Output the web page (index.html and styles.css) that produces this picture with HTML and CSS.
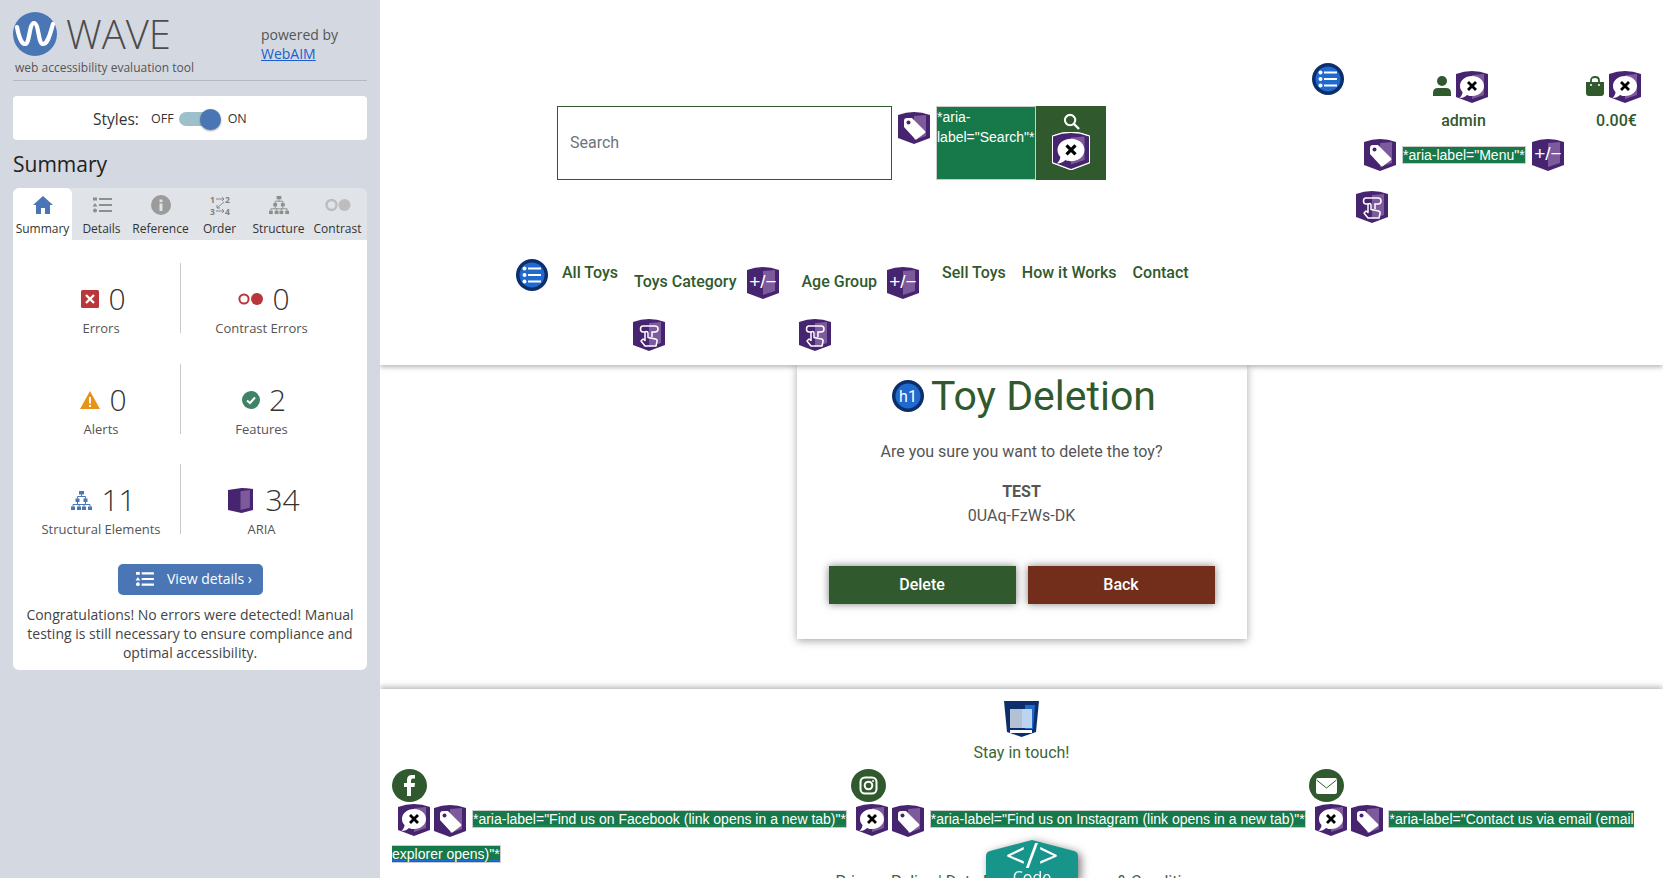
FILE: index.html
```html
<!DOCTYPE html>
<html>
  <head>
    <meta charset="utf-8">
    <title>Toy Deletion</title>
    <link rel="stylesheet" href="styles.css">
  </head>
  <body>
    <svg class="defs" width="0" height="0">
      <defs>
        <g id="shield">
          <path d="M0 3 Q8 0 16 0 Q24 0 32 3 V26 L16 32 L0 26 Z" fill="#46246f"/>
          <path d="M16 4 L28 3 V24 L16 28 Z" fill="#7d5a9c"/>
        </g>
        <symbol id="i-error" viewBox="0 0 32 32">
          <use href="#shield"/>
          <path d="M16 5 C23 5 28 9.500 28 15 C28 20.500 23 25 16 25 C14 25 13 25 11 24 C9 26 7 27 3.500 27 C5.500 25 6.500 23 6.500 21 C5 19.500 4 17.500 4 15 C4 9.500 9 5 16 5 Z" fill="#fff"/>
          <path d="M12 11 L20 19 M20 11 L12 19" stroke="#000" stroke-width="2.800"/>
        </symbol>
        <symbol id="i-tag" viewBox="0 0 32 32">
          <use href="#shield"/>
          <path d="M6 9 Q6 6 9 6 L14 6 L27 19 Q28 20 27 21 L19 27 Q18 28 17 27 L6 15 Z" fill="#fff"/>
          <circle cx="10.500" cy="10.500" r="2" fill="#46246f"/>
        </symbol>
        <symbol id="i-expand" viewBox="0 0 32 32">
          <use href="#shield"/>
          <text x="16" y="21" text-anchor="middle" class="shield-text">+/−</text>
        </symbol>
        <symbol id="i-hand" viewBox="0 0 32 32">
          <use href="#shield"/>
          <path d="M12 13 H10 Q7.500 13 7.500 10 Q7.500 7 10 7 H22 Q25 7 25 10 Q25 13 22 13 H19 V18" fill="none" stroke="#fff" stroke-width="1.500"/>
          <path d="M12 27 L8 22 L10 20 L12 21.500 V14 Q12 12.500 13.500 12.500 Q15 12.500 15 14 V18.500 L22.500 20 Q24.500 20.500 24 22.500 L23 27 Z" fill="none" stroke="#fff" stroke-width="1.500" stroke-linejoin="round"/>
        </symbol>
        <symbol id="i-list" viewBox="0 0 32 32">
          <circle cx="16" cy="16" r="16" fill="#0c2f6b"/>
          <circle cx="16" cy="16" r="12.500" fill="#1f69cf"/>
          <circle cx="8.500" cy="9.500" r="2" fill="#fff"/>
          <circle cx="8.500" cy="16" r="2" fill="#fff"/>
          <circle cx="8.500" cy="22.500" r="2" fill="#fff"/>
          <path d="M12 9.500 H25 M12 16 H25 M12 22.500 H25" stroke="#fff" stroke-width="2"/>
        </symbol>
        <symbol id="i-details" viewBox="0 0 20 17">
          <rect x="1" y="1" width="4" height="3"/>
          <path d="M3 6.500 L5.500 10 H0.500 Z"/>
          <circle cx="3" cy="14" r="2"/>
          <path d="M7 2.500 H20 M7 8.500 H20 M7 14.500 H20" stroke="currentColor" stroke-width="2.200"/>
        </symbol>
      </defs>
    </svg>

    <aside class="wave">
      <div class="wave-brand">
        <div class="brand-left">
          <div class="brand-logo">
            <svg class="logo-mark" viewBox="0 0 44 44">
              <circle cx="22" cy="22" r="22" fill="#4a76b5"/>
              <path d="M4 15 C6 26 9 32 12 32 C17 32 16 11 21 11 C26 11 25 32 30 32 C35 32 37 22 40 12" fill="none" stroke="#fff" stroke-width="4.200" stroke-linecap="round"/>
            </svg>
            <span class="logo-word">WAVE</span>
          </div>
          <div class="brand-tag">web accessibility evaluation tool</div>
        </div>
        <div class="brand-right">powered by<br><a href="#">WebAIM</a></div>
      </div>

      <div class="styles-box">
        <span class="styles-name">Styles:</span>
        <span class="styles-off">OFF</span>
        <span class="toggle"><span class="toggle-knob"></span></span>
        <span class="styles-on">ON</span>
      </div>

      <h2 class="wave-title">Summary</h2>

      <div class="tabs">
        <div class="tab tab-on">
          <svg class="tab-icon" viewBox="0 0 20 18"><path d="M10 0 L20 9 H17 V18 H12 V12 H8 V18 H3 V9 H0 Z" fill="#4a76b5"/></svg>
          <span>Summary</span>
        </div>
        <div class="tab">
          <svg class="tab-icon tab-grey" viewBox="0 0 20 17"><use href="#i-details"/></svg>
          <span>Details</span>
        </div>
        <div class="tab">
          <svg class="tab-icon" viewBox="0 0 20 20"><circle cx="10" cy="10" r="10" fill="#9b9b9b"/><rect x="8.500" y="8.500" width="3" height="7.500" fill="#e0e3e8"/><rect x="8.500" y="4.500" width="3" height="2.600" fill="#e0e3e8"/></svg>
          <span>Reference</span>
        </div>
        <div class="tab">
          <svg class="tab-icon tab-order" viewBox="0 0 20 20">
            <text x="0" y="7.500" class="order-text">1</text><text x="15" y="7.500" class="order-text">2</text>
            <text x="0" y="19.500" class="order-text">3</text><text x="15" y="19.500" class="order-text">4</text>
            <path d="M6 4 H14 M12 2 L14 4 L12 6 M14 7 L7 13 M7 10 V13 H10 M6 16 H14 M12 14 L14 16 L12 18" fill="none" stroke="#808080" stroke-width="0.900"/>
          </svg>
          <span>Order</span>
        </div>
        <div class="tab">
          <svg class="tab-icon" viewBox="0 0 21 19" fill="#8e8e8e">
            <rect x="8" y="0" width="5" height="3.500"/><rect x="4.500" y="7.500" width="4" height="3.500"/><rect x="12.500" y="7.500" width="4" height="3.500"/>
            <rect x="0" y="15.500" width="4" height="3.500"/><rect x="6" y="15.500" width="4" height="3.500"/><rect x="11" y="15.500" width="4" height="3.500"/><rect x="17" y="15.500" width="4" height="3.500"/>
            <path d="M10.500 3.500 V5.500 M6.500 7.500 V5.500 H14.500 V7.500 M2 15.500 V13.500 H19 V15.500 M6.500 11 V13.500 M14.500 11 V13.500 M8 13.500 V15.500 M13 13.500 V15.500" fill="none" stroke="#8e8e8e" stroke-width="1"/>
          </svg>
          <span>Structure</span>
        </div>
        <div class="tab">
          <svg class="tab-icon tab-wide" viewBox="0 0 26 13"><circle cx="6.500" cy="6.500" r="5" fill="none" stroke="#bdbdbd" stroke-width="2.400"/><circle cx="19.500" cy="6.500" r="6" fill="#bdbdbd"/></svg>
          <span>Contrast</span>
        </div>
      </div>

      <div class="summary">
        <div class="stats">
          <div class="stat">
            <div class="stat-top"><svg class="stat-icon" viewBox="0 0 18 18"><rect width="18" height="18" rx="1.500" fill="#b9363a"/><path d="M5 5 L13 13 M13 5 L5 13" stroke="#fff" stroke-width="2.400"/></svg><span class="stat-num">0</span></div>
            <div class="stat-label">Errors</div>
          </div>
          <div class="stat stat-right">
            <div class="stat-top"><svg class="stat-icon icon-contrast" viewBox="0 0 25 12"><circle cx="6" cy="6" r="4.600" fill="none" stroke="#b9363a" stroke-width="2"/><circle cx="19" cy="6" r="6" fill="#b9363a"/></svg><span class="stat-num">0</span></div>
            <div class="stat-label">Contrast Errors</div>
          </div>
          <div class="stat">
            <div class="stat-top"><svg class="stat-icon icon-alert" viewBox="0 0 20 18"><path d="M10 0 L20 18 H0 Z" fill="#e8921a"/><rect x="9" y="6" width="2" height="6.500" fill="#fff"/><rect x="9" y="14" width="2" height="2" fill="#fff"/></svg><span class="stat-num">0</span></div>
            <div class="stat-label">Alerts</div>
          </div>
          <div class="stat stat-right">
            <div class="stat-top"><svg class="stat-icon" viewBox="0 0 18 18"><circle cx="9" cy="9" r="9" fill="#3f8266"/><path d="M5 9.500 L8 12 L13 6.500" fill="none" stroke="#fff" stroke-width="2"/></svg><span class="stat-num">2</span></div>
            <div class="stat-label">Features</div>
          </div>
          <div class="stat">
            <div class="stat-top"><svg class="stat-icon icon-struct" viewBox="0 0 21 19" fill="#4a76b5">
              <rect x="8" y="0" width="5" height="3.500"/><rect x="4.500" y="7.500" width="4" height="3.500"/><rect x="12.500" y="7.500" width="4" height="3.500"/>
              <rect x="0" y="15.500" width="4" height="3.500"/><rect x="6" y="15.500" width="4" height="3.500"/><rect x="11" y="15.500" width="4" height="3.500"/><rect x="17" y="15.500" width="4" height="3.500"/>
              <path d="M10.500 3.500 V5.500 M6.500 7.500 V5.500 H14.500 V7.500 M2 15.500 V13.500 H19 V15.500 M6.500 11 V13.500 M14.500 11 V13.500 M8 13.500 V15.500 M13 13.500 V15.500" fill="none" stroke="#4a76b5" stroke-width="1"/>
            </svg><span class="stat-num">11</span></div>
            <div class="stat-label">Structural Elements</div>
          </div>
          <div class="stat stat-right">
            <div class="stat-top"><svg class="stat-icon icon-aria" viewBox="0 0 24 24"><path d="M0 2 L13 0 Q18 0 24 1 V21 L13 24 L0 21 Z" fill="#46246f"/><path d="M12 3 L21 2 V19 L12 21 Z" fill="#7d5a9c"/></svg><span class="stat-num">34</span></div>
            <div class="stat-label">ARIA</div>
          </div>
        </div>

        <a class="view-btn" href="#">
          <svg class="view-icon" viewBox="0 0 20 17" fill="#fff"><use href="#i-details"/></svg>
          <span>View details ›</span>
        </a>

        <p class="congrats">Congratulations! No errors were detected! Manual testing is still necessary to ensure compliance and optimal accessibility.</p>
      </div>
    </aside>

    <div class="page">
      <header class="site-head">
        <div class="head-top">
          <div class="search">
            <input class="search-input" type="text" placeholder="Search">
            <svg class="wi wi-tag"><use href="#i-tag"/></svg>
            <span class="aria-note aria-search">*aria-label="Search"*</span>
            <button class="search-btn">
              <svg class="search-glass" viewBox="0 0 18 18"><circle cx="7.500" cy="7.500" r="5.500" fill="none" stroke="#fff" stroke-width="2.200"/><path d="M11.500 11.500 L17 17" stroke="#fff" stroke-width="2.400"/></svg>
              <svg class="wi wi-ringed"><use href="#i-error"/></svg>
            </button>
          </div>

          <div class="account">
            <div class="account-row">
              <svg class="wi"><use href="#i-list"/></svg>
              <div class="acct acct-user">
                <div class="acct-icons">
                  <svg class="acct-glyph" viewBox="0 0 18 20"><circle cx="9" cy="5" r="5" fill="#305a2d"/><path d="M0 20 V17 Q0 12 5 12 H13 Q18 12 18 17 V20 Z" fill="#305a2d"/></svg>
                  <svg class="wi"><use href="#i-error"/></svg>
                </div>
                <div class="acct-text">admin</div>
              </div>
              <div class="acct acct-cart">
                <div class="acct-icons">
                  <svg class="acct-glyph" viewBox="0 0 18 20"><path d="M5 7 V4.500 Q5 1 9 1 Q13 1 13 4.500 V7" fill="none" stroke="#305a2d" stroke-width="1.800"/><path d="M0 6 H18 V17 Q18 20 15 20 H3 Q0 20 0 17 Z" fill="#305a2d"/><circle cx="5" cy="9" r="1" fill="#fff"/><circle cx="13" cy="9" r="1" fill="#fff"/></svg>
                  <svg class="wi"><use href="#i-error"/></svg>
                </div>
                <div class="acct-text">0.00€</div>
              </div>
            </div>
            <div class="menu-row">
              <svg class="wi"><use href="#i-tag"/></svg>
              <span class="aria-note aria-menu">*aria-label="Menu"*</span>
              <svg class="wi"><use href="#i-expand"/></svg>
            </div>
            <svg class="wi menu-hand"><use href="#i-hand"/></svg>
          </div>
        </div>

        <nav class="nav">
          <svg class="wi"><use href="#i-list"/></svg>
          <a class="nav-link nav-first" href="#">All Toys</a>
          <div class="nav-drop">
            <div class="drop-row"><a class="nav-link" href="#">Toys Category</a><svg class="wi"><use href="#i-expand"/></svg></div>
            <svg class="wi drop-hand"><use href="#i-hand"/></svg>
          </div>
          <div class="nav-drop">
            <div class="drop-row"><a class="nav-link" href="#">Age Group</a><svg class="wi"><use href="#i-expand"/></svg></div>
            <svg class="wi drop-hand"><use href="#i-hand"/></svg>
          </div>
          <a class="nav-link nav-sell" href="#">Sell Toys</a>
          <a class="nav-link nav-next" href="#">How it Works</a>
          <a class="nav-link nav-next" href="#">Contact</a>
        </nav>
      </header>

      <main class="content">
        <section class="card">
          <h1 class="card-title">
            <svg class="wi" viewBox="0 0 32 32"><circle cx="16" cy="16" r="16" fill="#0c2f6b"/><circle cx="16" cy="16" r="12.500" fill="#1f69cf"/><text x="16" y="22" text-anchor="middle" class="h1-text">h1</text></svg>
            <span>Toy Deletion</span>
          </h1>
          <p class="card-ask">Are you sure you want to delete the toy?</p>
          <div class="card-name">TEST</div>
          <div class="card-code">0UAq-FzWs-DK</div>
          <div class="card-btns">
            <button class="btn btn-del">Delete</button>
            <button class="btn btn-back">Back</button>
          </div>
        </section>
      </main>

      <footer class="site-foot">
        <svg class="foot-landmark" viewBox="0 0 35 36">
          <path d="M0 0 H35 L32 31 L17.500 36 L3 31 Z" fill="#0c2f6b"/>
          <path d="M21 4 H31 L29 28 L21 28 Z" fill="#1f69cf"/>
          <rect x="6" y="8" width="12" height="19" fill="#b4c0d4"/>
          <rect x="18" y="8" width="10" height="19" fill="#bcd4f0"/>
          <rect x="6" y="29" width="22" height="3" fill="#fff"/>
        </svg>
        <div class="foot-touch">Stay in touch!</div>
        <div class="foot-circles">
          <a class="circle" href="#"><svg viewBox="0 0 35 33"><path d="M19 27 V18 H22.500 L23 14 H19 V11.500 Q19 9.500 21 9.500 H23 V6 H20 Q15 6 15 11 V14 H12 V18 H15 V27 Z" fill="#fff"/></svg></a>
          <a class="circle" href="#"><svg viewBox="0 0 35 33"><rect x="9.500" y="8.500" width="16" height="16" rx="4.500" fill="none" stroke="#fff" stroke-width="2"/><circle cx="17.500" cy="16.500" r="3.800" fill="none" stroke="#fff" stroke-width="2"/><circle cx="22" cy="12" r="1" fill="#fff"/></svg></a>
          <a class="circle" href="#"><svg viewBox="0 0 35 33"><rect x="7" y="9" width="21" height="16" rx="2" fill="#fff"/><path d="M7.500 11 L17.500 19 L27.500 11" fill="none" stroke="#305a2d" stroke-width="1"/></svg></a>
        </div>
        <p class="foot-notes">
          <svg class="wi wi-first"><use href="#i-error"/></svg>
          <svg class="wi wi-low"><use href="#i-tag"/></svg>
          <a class="aria-note aria-link" href="#">*aria-label="Find us on Facebook (link opens in a new tab)"*</a>
          <svg class="wi wi-next"><use href="#i-error"/></svg>
          <svg class="wi wi-low"><use href="#i-tag"/></svg>
          <a class="aria-note aria-link" href="#">*aria-label="Find us on Instagram (link opens in a new tab)"*</a>
          <svg class="wi wi-next"><use href="#i-error"/></svg>
          <svg class="wi wi-low"><use href="#i-tag"/></svg>
          <a class="aria-note aria-link" href="#">*aria-label="Contact us via email (email explorer opens)"*</a>
        </p>
        <div class="foot-legal">Privacy Policy | Data Protection | Terms &amp; Conditions</div>
      </footer>

      <div class="code-tab">
        <svg viewBox="0 0 92 40" width="92" height="40"><path d="M0 16 Q0 12 4 11 L46 0 L88 11 Q92 12 92 16 V40 H0 Z" fill="#17958b"/></svg>
        <span class="code-sign">&lt;/&gt;</span>
        <span class="code-word">Code</span>
      </div>
    </div>
  </body>
</html>
```

FILE: styles.css
```css
*{
  box-sizing: border-box;
}
html,body{
  margin: 0;
  height: 878px;
  overflow: hidden;
}
body{
  display: flex;
  background: #fff;
  font-family: Roboto, sans-serif;
  color: #305a2d;
}
.defs{
  position: absolute;
}
.wi{
  display: inline-block;
  width: 32px;
  height: 32px;
  flex: none;
  vertical-align: middle;
}
.shield-text{
  font: 400 19px "Liberation Sans", sans-serif;
  fill: #fff;
}
.h1-text{
  font: 400 16px Roboto, sans-serif;
  fill: #fff;
}
.order-text{
  font: 700 8.500px "Open Sans", sans-serif;
  fill: #808080;
}

/* wave panel */
.wave{
  width: 380px;
  flex: none;
  background: #d4d8e0;
  padding: 12px 13px 0;
  font-family: "Open Sans", sans-serif;
  color: #333;
}
.wave-brand{
  display: flex;
  height: 69px;
  border-bottom: 1px solid #b5b8be;
}
.brand-left{
  width: 248px;
}
.brand-logo{
  display: flex;
  height: 44px;
  gap: 9px;
}
.logo-mark{
  width: 44px;
  height: 44px;
}
.logo-word{
  font-size: 40px;
  font-weight: 300;
  line-height: 44px;
  color: #4c4c4c;
}
.brand-tag{
  font-size: 12px;
  line-height: 17px;
  margin: 3px 0 0 2px;
  color: #555;
}
.brand-right{
  font-size: 14px;
  line-height: 19px;
  padding-top: 13px;
  color: #555;
}
.brand-right a{
  color: #1a5fd0;
}
.styles-box{
  display: flex;
  align-items: center;
  height: 44px;
  margin-top: 15px;
  padding: 1px 0 0 80px;
  background: #fff;
  border-radius: 4px;
}
.styles-name{
  font-size: 15.500px;
  width: 58px;
}
.styles-off,.styles-on{
  font-size: 12.500px;
}
.toggle{
  position: relative;
  width: 41px;
  height: 14px;
  margin: 0 8px 0 5px;
  background: #9dc1cc;
  border-radius: 7px;
}
.toggle-knob{
  position: absolute;
  top: -3px;
  right: -1px;
  width: 21px;
  height: 21px;
  border-radius: 50%;
  background: #4a76b5;
  box-shadow: 0 1px 2px rgba(0,0,0,.4);
}
.wave-title{
  font-size: 21px;
  font-weight: 400;
  line-height: 30px;
  margin: 9px 0 9px;
  color: #222;
}
.tabs{
  display: flex;
  height: 52px;
  background: #e0e3e8;
  border-radius: 6px 6px 0 0;
}
.tab{
  flex: 1;
  display: flex;
  flex-direction: column;
  align-items: center;
  padding-top: 7px;
  font-size: 12px;
  line-height: 16px;
  white-space: nowrap;
}
.tab-on{
  background: #fff;
  border-radius: 6px 6px 0 0;
}
.tab-icon{
  width: 20px;
  height: 20px;
  margin-bottom: 6px;
}
.tab-grey{
  fill: #8e8e8e;
  color: #8e8e8e;
}
.tab-order{
  overflow: visible;
}
.tab-wide{
  width: 26px;
}
.summary{
  background: #fff;
  height: 430px;
  border-radius: 0 0 6px 6px;
}
.stats{
  display: grid;
  grid-template-columns: 158px 162px;
  grid-auto-rows: 70px;
  row-gap: 30.500px;
  padding: 23px 0 0 9px;
}
.stat{
  display: flex;
  flex-direction: column;
  align-items: center;
  text-align: center;
}
.stat-right{
  border-left: 1px solid #c9c9c9;
}
.stat-top{
  display: flex;
  align-items: center;
  gap: 9px;
  height: 44px;
  margin-top: 14px;
  padding-left: 5px;
  flex: none;
}
.stat-icon{
  width: 18px;
  height: 18px;
}
.icon-contrast{
  width: 25px;
  height: 12px;
}
.icon-alert{
  width: 20px;
}
.icon-struct{
  width: 21px;
  height: 19px;
}
.icon-aria{
  width: 25px;
  height: 25px;
  margin-right: 3px;
}
.stat-num{
  font-size: 30px;
  font-weight: 300;
  line-height: 44px;
  color: #333;
}
.stat-label{
  font-size: 13px;
  line-height: 18px;
  margin-top: -2px;
  color: #555;
  flex: none;
}
.view-btn{
  display: flex;
  align-items: center;
  width: 145px;
  height: 31px;
  margin: 30px 0 0 105px;
  padding: 0 0 2px 17px;
  background: #4a76b5;
  border-radius: 5px;
  color: #fff;
  font-size: 14px;
  text-decoration: none;
}
.view-icon{
  width: 19px;
  height: 16px;
  margin-right: 13px;
  color: #fff;
}
.congrats{
  margin: 10px 8px 0;
  font-size: 14px;
  line-height: 19px;
  text-align: center;
  color: #444;
}

/* page */
.page{
  flex: 1;
  position: relative;
  display: flex;
  flex-direction: column;
  overflow: hidden;
  min-width: 0;
}
.site-head{
  position: relative;
  z-index: 2;
  flex: none;
  height: 365px;
  background: #fff;
  box-shadow: 0 2px 5px rgba(0,0,0,.3);
}
.head-top{
  display: flex;
  height: 259px;
  padding-left: 177px;
}
.search{
  display: flex;
  align-items: flex-start;
  margin-top: 106px;
}
.search-input{
  width: 335px;
  height: 74px;
  padding: 0 12px 2px;
  border: 1px solid #305a2d;
  font: 16px Roboto, sans-serif;
  outline: none;
}
.search-input::placeholder{
  color: #6c757d;
}
.wi-tag{
  margin: 6px 6px 0;
}
.aria-note{
  background: #17784a;
  border: 1px solid #ccc;
  color: #fff;
  font: 14px/1 "Liberation Sans", sans-serif;
}
.aria-search{
  display: block;
  width: 100px;
  height: 74px;
  line-height: 20px;
  white-space: pre-line;
}
.search-btn{
  display: flex;
  flex-direction: column;
  align-items: center;
  width: 70px;
  height: 74px;
  padding: 7px 0 0;
  background: #305a2d;
  border: 0;
}
.search-glass{
  width: 17px;
  height: 17px;
  margin-bottom: 3px;
}
.wi-ringed{
  width: 36px;
  height: 36px;
  filter: drop-shadow(1px 0 0 #fff) drop-shadow(-1px 0 0 #fff) drop-shadow(0 1px 0 #fff) drop-shadow(0 -1px 0 #fff);
}
.account{
  margin-left: 206px;
  padding-top: 63px;
}
.account-row{
  display: flex;
  height: 76px;
}
.acct{
  margin-top: 8px;
  text-align: center;
}
.acct-user{
  margin-left: 89px;
}
.acct-cart{
  margin-left: 98px;
}
.acct-icons{
  display: flex;
  align-items: center;
  gap: 5px;
}
.acct-glyph{
  width: 18px;
  height: 20px;
  margin-bottom: 2px;
}
.acct-text{
  font-size: 16px;
  font-weight: 500;
  line-height: 24px;
  margin-top: 6px;
  padding-left: 6px;
}
.menu-row{
  display: flex;
  align-items: center;
  gap: 6px;
  margin-left: 52px;
}
.aria-menu{
  padding: 1px 0;
  white-space: nowrap;
}
.menu-hand{
  display: block;
  margin: 20px 0 0 44px;
}
.nav{
  display: flex;
  align-items: flex-start;
  padding-left: 136px;
}
.nav-link{
  font-size: 16px;
  font-weight: 500;
  line-height: 28px;
  color: #305a2d;
  text-decoration: none;
  white-space: nowrap;
}
.nav-first{
  margin-left: 14px;
}
.nav-drop{
  margin: 8px 0 0 16px;
}
.nav-drop + .nav-drop{
  margin-left: 23px;
}
.drop-row{
  display: flex;
  align-items: center;
  gap: 10px;
}
.drop-row .nav-link{
  margin-top: -3px;
}
.drop-hand{
  display: block;
  margin: 20px 0 0 -1px;
}
.nav-drop + .nav-drop .drop-hand{
  margin-left: -3px;
}
.nav-sell{
  margin-left: 23px;
}
.nav-next{
  margin-left: 16px;
}

.content{
  flex: none;
  height: 324px;
  display: flex;
  justify-content: center;
  align-items: flex-start;
}
.card{
  width: 450px;
  height: 274px;
  padding: 8px 32px 0;
  text-align: center;
  background: #fff;
  box-shadow: 0 2px 8px rgba(0,0,0,.35);
}
.card-title{
  display: flex;
  justify-content: center;
  align-items: center;
  gap: 7px;
  margin: 0;
  padding-left: 5px;
  font-size: 41px;
  font-weight: 400;
  line-height: 46px;
}
.card-ask{
  margin: 21px 0 0;
  font-size: 16px;
  line-height: 24px;
  color: #555;
}
.card-name{
  margin-top: 16px;
  font-size: 16px;
  font-weight: 700;
  line-height: 24px;
  color: #555;
}
.card-code{
  font-size: 16px;
  line-height: 24px;
  color: #555;
}
.card-btns{
  display: flex;
  gap: 12px;
  margin-top: 38px;
}
.btn{
  flex: 1;
  height: 38px;
  padding: 0 0 2px;
  border: 0;
  color: #fff;
  font: 500 16px Roboto, sans-serif;
  box-shadow: 0 0 8px rgba(0,0,0,.5);
}
.btn-del{
  background: #305a2d;
}
.btn-back{
  background: #722e1a;
}

.site-foot{
  position: relative;
  flex: none;
  height: 220px;
  padding-top: 12px;
  background: #fff;
  text-align: center;
  box-shadow: 0 -2px 6px rgba(0,0,0,.3);
}
.foot-landmark{
  display: block;
  width: 35px;
  height: 36px;
  margin: 0 auto;
}
.foot-touch{
  font-size: 16px;
  line-height: 24px;
  margin-top: 4px;
  color: #3d6539;
}
.foot-circles{
  display: grid;
  grid-template-columns: repeat(3, 458.500px);
  margin: 4px 0 0 12px;
  text-align: left;
}
.circle{
  display: block;
  width: 35px;
  height: 33px;
  background: #305a2d;
  border-radius: 50%;
}
.circle svg{
  display: block;
}
.foot-notes{
  margin: 0 12px;
  line-height: 34px;
  text-align: left;
}
.wi-first{
  margin-left: 6px;
}
.wi-next{
  margin-left: 5px;
}
.wi-low{
  margin-top: 2px;
}
.aria-link{
  margin-left: 2px;
  color: #fff;
  text-decoration: underline #1a6fe0;
  line-height: 1.2;
}
.foot-legal{
  margin-top: -1px;
  font-size: 16px;
  line-height: 24px;
  color: #3d6539;
}
.code-tab{
  position: absolute;
  left: 606px;
  top: 840px;
  width: 92px;
  height: 40px;
  filter: drop-shadow(3px 2px 4px rgba(0,0,0,.5));
  z-index: 3;
  color: #fff;
  text-align: center;
}
.code-tab svg{
  position: absolute;
  left: 0;
  top: 0;
}
.code-sign{
  position: absolute;
  left: 0;
  right: 0;
  top: -3px;
  font: 400 35px/36px "Open Sans", sans-serif;
}
.code-word{
  position: absolute;
  left: 0;
  right: 0;
  top: 28px;
  font: 16px/18px "Open Sans", sans-serif;
}
```
